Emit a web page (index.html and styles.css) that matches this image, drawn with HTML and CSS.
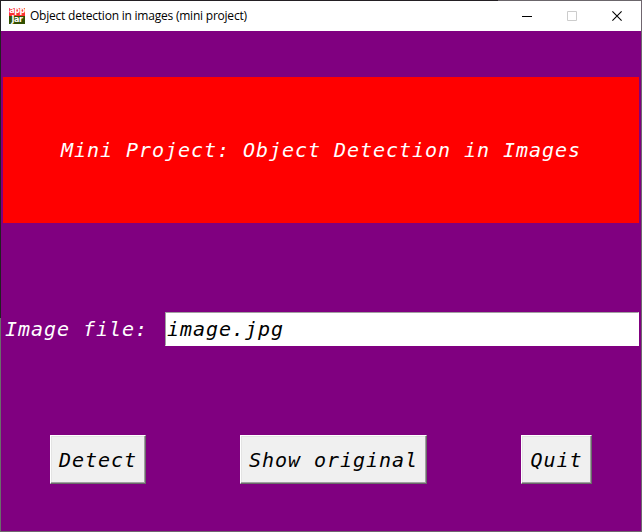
FILE: index.html
```html
<!DOCTYPE html>
<html lang="en">
<head>
<meta charset="utf-8">
<title>Object detection in images (mini project)</title>
<link rel="stylesheet" href="styles.css">
</head>
<body>
<div class="window">
  <header class="titlebar">
    <div class="app-icon"><span class="app">app</span><span class="jar">Jar</span></div>
    <div class="title"><span>Object detection in images (mini project)</span></div>
    <div class="controls">
      <svg width="11" height="11" viewBox="0 0 11 11"><path d="M0 5.5H10" stroke="#000"/></svg>
      <svg width="11" height="11" viewBox="0 0 11 11"><path d="M.5.5h9v9h-9z" fill="none" stroke="#ccc"/></svg>
      <svg width="11" height="11" viewBox="0 0 11 11"><path d="M.4.4l9.2 9.2M9.6.4L.4 9.6" stroke="#000" stroke-width="1.1"/></svg>
    </div>
  </header>
  <main class="content">
    <h1 class="banner"><span>Mini Project: Object Detection in Images</span></h1>
    <div class="field">
      <label for="file">Image file:</label>
      <input id="file" type="text" value="image.jpg" spellcheck="false">
    </div>
    <div class="buttons">
      <div class="cell"><button>Detect</button></div>
      <div class="cell"><button>Show original</button></div>
      <div class="cell"><button>Quit</button></div>
    </div>
  </main>
</div>
</body>
</html>
```
FILE: styles.css
```css
* { box-sizing: border-box; }
body { margin: 0; background: #6b656b; overflow: hidden; }
.window {
  width: 642px;
  height: 532px;
  padding: 1px;
  display: flex;
  flex-direction: column;
  background:
    linear-gradient(90deg, #231f23 498px, #6b666b 498px) 0 0 / 642px 1px no-repeat,
    linear-gradient(#231f23 318px, #6b6b6b 318px) 0 0 / 1px 532px no-repeat,
    #6f666f;
}
.titlebar {
  height: 30px;
  flex: none;
  display: flex;
  align-items: center;
  padding: 0 18px 0 8px;
  background: #fff;
}
.app-icon {
  width: 16px;
  height: 16px;
  display: grid;
  grid-template-rows: 8px 8px;
  overflow: hidden;
  color: #fff;
  font: bold 8px/7px "DejaVu Sans", sans-serif;
  letter-spacing: -0.4px;
  text-align: center;
}
.app { background: #fa3232; line-height: 6px; }
.jar { background: #325000; line-height: 8px; }
.title {
  flex: 1;
  margin-left: 5px;
  font: 12px/16px "Open Sans", sans-serif;
  letter-spacing: -0.22px;
  white-space: nowrap;
  color: #000;
}
.controls { display: flex; gap: 34px; }
.controls svg { display: block; }
.content {
  flex: 1;
  padding: 46px 2px 0;
  background: #800080;
}
.banner, .field label, .field input, button {
  font: italic 20px/28px "DejaVu Sans Mono", monospace;
  letter-spacing: 0.96px;
  white-space: pre;
}
.banner {
  height: 146px;
  margin: 0;
  display: flex;
  align-items: center;
  justify-content: center;
  background: #f00;
  color: #fff;
}
.field {
  height: 34px;
  margin-top: 89px;
  display: flex;
  align-items: center;
}
.field label { width: 162px; padding-left: 2px; color: #fff; }
.field input {
  flex: 1;
  min-width: 0;
  height: 34px;
  padding: 0 1px;
  border: 1px solid #fff;
  border-top-color: #a0a0a0;
  border-left-color: #a0a0a0;
  border-radius: 0;
  outline: 0;
  background: #fff;
  color: #000;
}
.buttons {
  margin-top: 89px;
  display: grid;
  grid-template-columns: 190px 281px 165px;
}
.cell { display: flex; justify-content: center; }
button {
  height: 49px;
  padding: 0 8px;
  border: 1px solid;
  border-color: #fff #696969 #696969 #fff;
  border-radius: 0;
  box-shadow: inset -1px -1px #a0a0a0, inset 1px 1px #e3e3e3;
  background: #f0f0f0;
  color: #000;
}
```
